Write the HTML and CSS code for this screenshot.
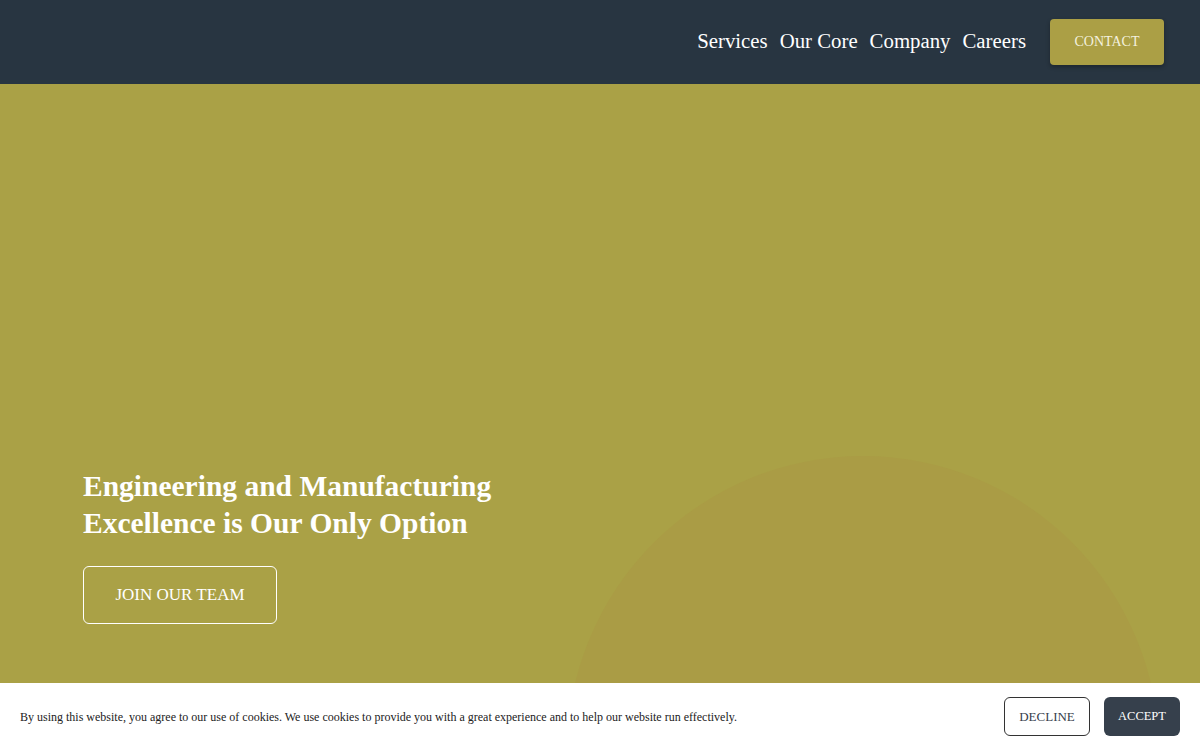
FILE: index.html
```html
<!DOCTYPE html>
<html lang="en">
<head>
<meta charset="utf-8">
<title>Engineering and Manufacturing</title>
<link rel="stylesheet" href="styles.css">
</head>
<body>
<header class="site-header">
  <nav class="nav">
    <a class="nav-link" href="#">Services</a>
    <a class="nav-link" href="#">Our Core</a>
    <a class="nav-link" href="#">Company</a>
    <a class="nav-link" href="#">Careers</a>
  </nav>
  <a class="contact-btn" href="#">CONTACT</a>
</header>
<main class="hero">
  <div class="hero-shape"></div>
  <div class="hero-content">
    <h1 class="hero-title">Engineering and Manufacturing<br>Excellence is Our Only Option</h1>
    <a class="join-btn" href="#">JOIN OUR TEAM</a>
  </div>
</main>
<div class="cookie-bar">
  <p class="cookie-text">By using this website, you agree to our use of cookies. We use cookies to provide you with a great experience and to help our website run effectively.</p>
  <div class="cookie-actions">
    <button class="btn-decline">DECLINE</button>
    <button class="btn-accept">ACCEPT</button>
  </div>
</div>
</body>
</html>
```

FILE: styles.css
```css
* { box-sizing: border-box; }
html, body { margin: 0; padding: 0; }
body {
  font-family: "Liberation Serif", "Times New Roman", serif;
  width: 1200px;
  height: 750px;
  overflow: hidden;
  background: #aaa146;
}
a { text-decoration: none; }

.site-header {
  height: 84px;
  background: #283541;
  display: flex;
  align-items: center;
  justify-content: flex-end;
  padding-right: 36px;
}
.nav {
  display: flex;
  gap: 12px;
  margin-right: 24px;
  padding-bottom: 2px;
}
.nav-link {
  color: #ffffff;
  font-size: 20.8px;
}
.contact-btn {
  width: 114px;
  height: 46px;
  display: flex;
  align-items: center;
  justify-content: center;
  background: #ab9f45;
  color: #f4f1df;
  font-size: 14px;
  border-radius: 4px;
  box-shadow: 0 2px 4px rgba(0,0,0,0.3);
}

.hero {
  position: relative;
  height: 666px;
  overflow: hidden;
  background: #aaa146;
}
.hero-shape {
  position: absolute;
  left: 567px;
  top: 372px;
  width: 592px;
  height: 592px;
  border-radius: 50%;
  background: #aa9c45;
}
.hero-content {
  position: relative;
  padding: 384px 0 0 83px;
}
.hero-title {
  margin: 0;
  color: #ffffff;
  font-size: 29.5px;
  line-height: 37px;
  font-weight: bold;
}
.join-btn {
  margin-top: 24px;
  width: 194px;
  height: 58px;
  display: flex;
  align-items: center;
  justify-content: center;
  border: 1px solid #ffffff;
  border-radius: 6px;
  color: #ffffff;
  font-size: 17px;
}

.cookie-bar {
  position: fixed;
  left: 0;
  bottom: 0;
  width: 1200px;
  height: 67px;
  background: #ffffff;
  display: flex;
  align-items: center;
  justify-content: space-between;
  padding: 0 20px;
}
.cookie-text {
  margin: 0;
  font-size: 12px;
  color: #222222;
  padding-top: 2px;
}
.cookie-actions {
  display: flex;
  gap: 14px;
}
.btn-decline, .btn-accept {
  font-family: "Liberation Serif", "Times New Roman", serif;
  font-size: 13px;
  height: 39px;
  border-radius: 6px;
  cursor: pointer;
}
.btn-decline {
  width: 86px;
  background: #ffffff;
  border: 1px solid #333333;
  color: #36404c;
}
.btn-accept {
  width: 76px;
  background: #36404c;
  border: none;
  color: #ffffff;
  font-size: 12.5px;
}
```
